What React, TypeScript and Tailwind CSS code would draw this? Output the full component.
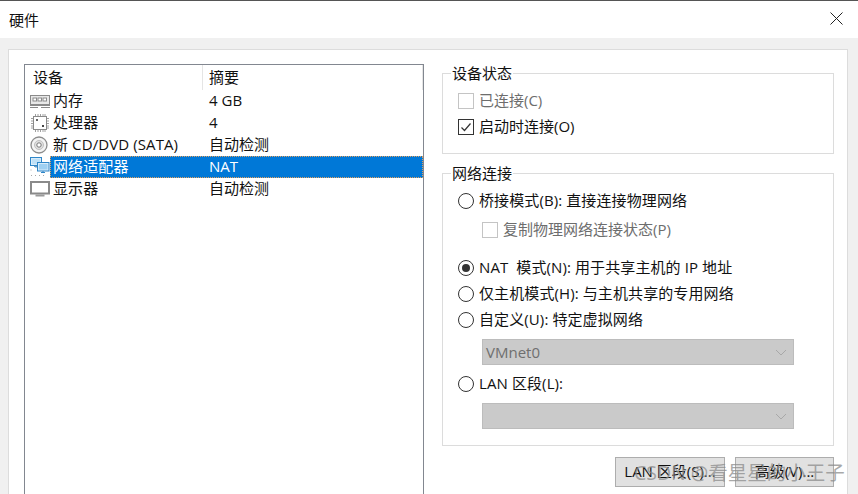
const font = { fontFamily: '"Open Sans", "Noto Sans CJK SC", sans-serif' };

function MemoryIcon() {
  return (
    <svg width="20" height="13" viewBox="0 0 20 13" className="shrink-0">
      <rect x="0.5" y="0.5" width="19" height="9" fill="#e8e8e8" stroke="#8a8a8a" />
      <rect x="3" y="3" width="3.5" height="3" fill="#fff" stroke="#8a8a8a" />
      <rect x="8" y="3" width="3.5" height="3" fill="#fff" stroke="#8a8a8a" />
      <rect x="13" y="3" width="3.5" height="3" fill="#fff" stroke="#8a8a8a" />
      <path d="M0 10.5H20M0 12.5H8M11 12.5H20" stroke="#8a8a8a" fill="none" />
    </svg>
  );
}

function CpuIcon() {
  return (
    <svg width="20" height="18" viewBox="0 0 20 18" className="shrink-0">
      <rect x="3.5" y="2.5" width="13" height="13" fill="#fff" stroke="#8a8a8a" />
      <path d="M5.5 0v2M8 0v2M10.5 0v2M13 0v2M15 0v2M5.5 16v2M8 16v2M10.5 16v2M13 16v2M15 16v2M1 4.5h2M1 7h2M1 9.5h2M1 12h2M1 14h2M17 4.5h2M17 7h2M17 9.5h2M17 12h2M17 14h2" stroke="#a0a0a0" fill="none" />
      <rect x="6" y="5" width="2" height="2" fill="#666" />
      <rect x="12" y="11" width="2" height="2" fill="#444" />
    </svg>
  );
}

function DiscIcon() {
  return (
    <svg width="18" height="18" viewBox="0 0 18 18" className="shrink-0">
      <circle cx="9" cy="9" r="8" fill="#f4f4f4" stroke="#8c8c8c" strokeWidth="1.3" />
      <circle cx="9" cy="9" r="4.5" fill="#e0e0e0" stroke="#c0c0c0" />
      <circle cx="9" cy="9" r="2.2" fill="#fff" stroke="#777" />
    </svg>
  );
}

function NetworkIcon() {
  return (
    <svg width="20" height="20" viewBox="0 0 20 20" className="shrink-0">
      <rect x="0.5" y="0.5" width="11" height="8" fill="#d8ecfa" stroke="#2f86c8" />
      <rect x="2" y="2" width="8" height="5" fill="#bfe0f6" />
      <path d="M4 9.5h4M6 9v2" stroke="#6a9cc0" fill="none" />
      <rect x="7.5" y="5.5" width="11.5" height="8.5" fill="#d8ecfa" stroke="#2f86c8" />
      <rect x="9" y="7" width="8.5" height="5.5" fill="#9fd0f2" />
      <path d="M11 15.5h4M13 14v2" stroke="#2f86c8" fill="none" />
      <path d="M1 12.5v2M1 18.5h2M5 18.5h2M9 18.5h2M13 18.5h2" stroke="#a8a8a8" strokeDasharray="1 1" fill="none" />
    </svg>
  );
}

function MonitorIcon() {
  return (
    <svg width="20" height="16" viewBox="0 0 20 16" className="shrink-0">
      <rect x="1" y="1" width="18" height="11.5" fill="#fff" stroke="#8a8a8a" strokeWidth="2" />
      <rect x="5.5" y="13.5" width="9" height="2" fill="#9a9a9a" />
    </svg>
  );
}

function DeviceRow({ icon, name, summary, selected }: { icon: React.ReactNode; name: string; summary: string; selected?: boolean }) {
  return (
    <div className="flex h-[22px] items-center">
      <div className="flex w-[25px] shrink-0 justify-start pl-[5px]">{icon}</div>
      <div
        className={
          selected
            ? "flex h-[22px] flex-1 items-center border border-dotted border-[#e0a060] bg-[#0078d7] pl-[2px] text-white"
            : "flex h-[22px] flex-1 items-center pl-[3px] text-[#111]"
        }
      >
        <span className="w-[156px] shrink-0 whitespace-pre pb-[2px] leading-[20px] tracking-[0.1px]">{name}</span>
        <span className="whitespace-pre pb-[2px] leading-[20px]">{summary}</span>
      </div>
    </div>
  );
}

function Check({ checked, disabled }: { checked?: boolean; disabled?: boolean }) {
  return (
    <span className={disabled ? "flex h-4 w-4 shrink-0 border border-[#c4c4c4] bg-white" : "flex h-4 w-4 shrink-0 border border-[#333] bg-white"}>
      {checked && (
        <svg width="14" height="14" viewBox="0 0 14 14">
          <path d="M2.5 7.5 L5.5 10.5 L11.5 3.5" stroke="#333" strokeWidth="1.2" fill="none" />
        </svg>
      )}
    </span>
  );
}

function Radio({ on }: { on?: boolean }) {
  return (
    <span className="flex h-4 w-4 shrink-0 items-center justify-center rounded-full border border-[#333] bg-white">
      {on && <span className="h-2 w-2 rounded-full bg-[#333]" />}
    </span>
  );
}

function RadioRow({ label, on, className }: { label: string; on?: boolean; className: string }) {
  return (
    <div className={"flex items-center gap-[5px] whitespace-pre text-[#111] " + className}>
      <Radio on={on} />
      <span className="pb-[2px] leading-[20px] tracking-[0.1px]">{label}</span>
    </div>
  );
}

function Select({ value, className }: { value?: string; className: string }) {
  return (
    <div className={"ml-[24px] flex h-[26px] w-[312px] items-center justify-between border border-[#bcbcbc] bg-[#cacaca] pl-[3px] pr-[6px] text-[#6f6f6f] " + className}>
      <span className="leading-[20px]">{value}</span>
      <svg width="12" height="7" viewBox="0 0 12 7">
        <path d="M1 1 L6 6 L11 1" stroke="#a8a8a8" fill="none" />
      </svg>
    </div>
  );
}

function Group({ title, className, children }: { title: string; className: string; children: React.ReactNode }) {
  return (
    <div className={"border border-[#dcdcdc] px-[15px] " + className}>
      <div className="-mt-[11px] ml-[-7px] h-5 w-fit bg-white px-[1px] leading-5 text-[#111]">{title}</div>
      {children}
    </div>
  );
}

export default function App() {
  return (
    <div className="relative flex h-[494px] w-[858px] flex-col overflow-hidden bg-[#f0f0f0] text-[15px]" style={font}>
      <div className="flex h-[38px] shrink-0 items-center justify-between border-t border-[#555] bg-white pl-[9px] pr-[15px]">
        <span className="leading-[20px] text-[#111]">硬件</span>
        <svg width="13" height="13" viewBox="0 0 13 13" className="mb-[2px]">
          <path d="M0.5 0.5 L12.5 12.5 M12.5 0.5 L0.5 12.5" stroke="#222" strokeWidth="1" fill="none" />
        </svg>
      </div>
      <div className="mx-[8px] mt-[11px] mr-[10px] flex flex-1 gap-[18px] border-l border-r border-t border-[#dcdcdc] bg-white pl-[15px] pr-[13px] pt-[14px]">
        <div className="mb-[-2px] flex h-[440px] w-[400px] shrink-0 flex-col border border-[#828790] bg-white">
          <div className="flex h-[25px] shrink-0 items-center text-[#111]">
            <span className="flex h-[25px] w-[178px] items-center border-r border-[#e5e5e5] pb-[2px] pl-[8px] leading-[20px]">设备</span>
            <span className="flex h-[25px] flex-1 items-center border-r border-[#e5e5e5] pb-[2px] pl-[6px] leading-[20px]">摘要</span>
          </div>
          <DeviceRow icon={<MemoryIcon />} name="内存" summary="4 GB" />
          <DeviceRow icon={<CpuIcon />} name="处理器" summary="4" />
          <DeviceRow icon={<DiscIcon />} name="新 CD/DVD (SATA)" summary="自动检测" />
          <DeviceRow icon={<NetworkIcon />} name="网络适配器" summary="NAT" selected />
          <DeviceRow icon={<MonitorIcon />} name="显示器" summary="自动检测" />
        </div>
        <div className="flex w-[392px] shrink-0 flex-col pt-[9px]">
          <Group title="设备状态" className="h-[81px]">
            <div className="mt-[5px] flex h-[26px] items-center gap-[5px] text-[#6d6d6d]">
              <Check disabled />
              <span className="pb-[2px] leading-[20px]">已连接(C)</span>
            </div>
            <div className="flex h-[26px] items-center gap-[5px] text-[#111]">
              <Check checked />
              <span className="pb-[2px] leading-[20px]">启动时连接(O)</span>
            </div>
          </Group>
          <Group title="网络连接" className="mt-[19px] h-[273px]">
            <RadioRow className="mt-[5px] h-[26px]" label="桥接模式(B): 直接连接物理网络" />
            <div className="ml-[24px] mt-[3px] flex h-[26px] items-center gap-[5px] text-[#6d6d6d]">
              <Check disabled />
              <span className="pb-[2px] leading-[20px]">复制物理网络连接状态(P)</span>
            </div>
            <RadioRow className="mt-[12px] h-[26px]" label="NAT  模式(N): 用于共享主机的 IP 地址" on />
            <RadioRow className="h-[26px]" label="仅主机模式(H): 与主机共享的专用网络" />
            <RadioRow className="h-[26px]" label="自定义(U): 特定虚拟网络" />
            <Select className="mt-[6px]" value="VMnet0" />
            <RadioRow className="mt-[6px] h-[26px]" label="LAN 区段(L):" />
            <Select className="mt-[6px]" />
          </Group>
          <div className="mt-[11px] flex justify-end gap-[10px] text-[#111]">
            <div className="flex h-[30px] w-[110px] items-center justify-center border border-[#adadad] bg-[#e1e1e1] pb-[2px] leading-[20px]">LAN 区段(S)...</div>
            <div className="flex h-[30px] w-[99px] items-center justify-center border border-[#adadad] bg-[#e1e1e1] pb-[2px] leading-[20px]">高级(V)...</div>
          </div>
        </div>
      </div>
      <div className="absolute left-[634px] top-[458px] whitespace-pre text-[19.5px] leading-[30px] text-[#8c8c8c]/75">CSDN @看星星的小王子</div>
    </div>
  );
}
